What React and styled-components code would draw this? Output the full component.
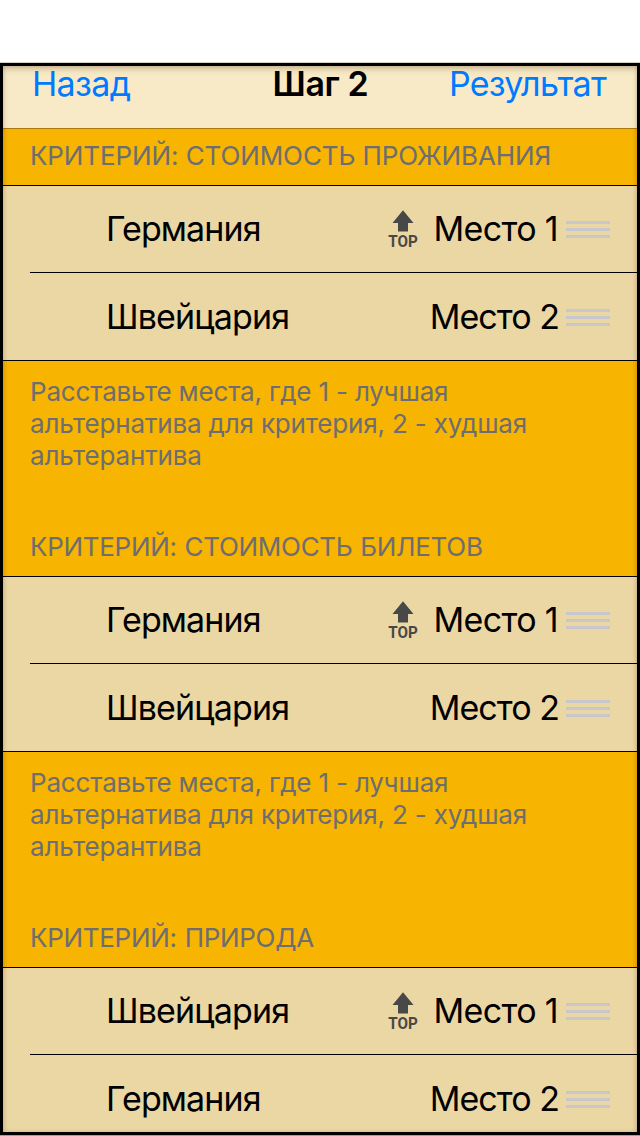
import React from "react";
import styled, { createGlobalStyle } from "styled-components";

const GlobalStyle = createGlobalStyle`
  * { box-sizing: border-box; }
  body { margin: 0; background: #fff; font-family: Inter, "Liberation Sans", sans-serif; }
`;

const Page = styled.div`
  width: 640px;
  height: 1136px;
  padding-top: 62px;
  overflow: hidden;
  background: #fff;
`;

const Frame = styled.div`
  position: relative;
  height: 1074px;
  border-top: 1px solid #d4d0c8;
  border-bottom: 1px solid #b59c80;
  overflow: hidden;
`;

const FrameEdge = styled.div`
  position: absolute;
  inset: 0;
  border: 3px solid #000;
  box-shadow: inset 0 4px 6px -1px rgba(70, 40, 0, 0.22), inset 0 0 4px rgba(70, 40, 0, 0.18);
  pointer-events: none;
`;

const NavBar = styled.header`
  display: grid;
  grid-template-columns: 1fr auto 1fr;
  height: 66px;
  padding: 0 34px 0 32px;
  background: #f8eac6;
  border-bottom: 1px solid #a97b0c;
  font-size: 34px;
  line-height: 42px;
  white-space: nowrap;
`;

const NavLink = styled.span`
  color: #007aff;
  letter-spacing: ${(p) => p.$spacing}px;
  text-align: ${(p) => p.$align};
`;

const Title = styled.span`
  padding-left: 3px;
  font-weight: 600;
  letter-spacing: -0.4px;
  color: #000;
`;

const SectionHeader = styled.h2`
  height: ${(p) => (p.$first ? 57 : 88)}px;
  margin: 0;
  padding: ${(p) => (p.$first ? 11 : 42)}px 0 0 30px;
  background: #f7b400;
  border-bottom: 1px solid #000;
  color: #6d6d72;
  font-size: 26px;
  font-weight: 400;
  line-height: 32px;
  letter-spacing: ${(p) => p.$spacing}px;
  word-spacing: ${(p) => p.$gap}px;
  white-space: nowrap;
`;

const Hint = styled.p`
  height: 128px;
  margin: 0;
  padding: 15px 0 0 30px;
  background: #f7b400;
  color: #6d6d72;
  font-size: 26px;
  line-height: 32px;
`;

const HintLine = styled.span`
  display: block;
  letter-spacing: -0.17px;
  white-space: nowrap;
`;

const Rows = styled.div`
  border-bottom: 1px solid #000;
  background: #ebd7a4;
`;

const Row = styled.div`
  display: flex;
  align-items: flex-start;
  height: 87px;
  margin-left: 30px;
  padding: ${(p) => (p.$divided ? 22 : 23)}px 30px 0 76px;
  border-bottom: ${(p) => (p.$divided ? "1px solid #000" : "0")};
  color: #000;
  font-size: 34px;
  line-height: 42px;
`;

const Name = styled.span`
  flex: 1;
  letter-spacing: ${(p) => p.$spacing}px;
`;

const TopIcon = styled.svg`
  width: 34px;
  height: 40px;
  margin: 2px 14px 0 0;
`;

const Place = styled.span`
  margin-right: ${(p) => p.$gap}px;
  letter-spacing: ${(p) => p.$spacing}px;
  white-space: nowrap;
`;

const Grip = styled.span`
  width: 44px;
  height: 17px;
  margin-top: 13px;
  border: solid #c7c7cc;
  border-width: 3px 0;
  background: linear-gradient(#c7c7cc, #c7c7cc) center / 44px 3px no-repeat;
`;

const names = {
  de: { text: "Германия", spacing: -0.93 },
  ch: { text: "Швейцария", spacing: -0.84 },
};

const sections = [
  { title: "КРИТЕРИЙ: СТОИМОСТЬ ПРОЖИВАНИЯ", spacing: -0.1, gap: 0, order: ["de", "ch"] },
  { title: "КРИТЕРИЙ: СТОИМОСТЬ БИЛЕТОВ", spacing: -0.29, gap: 0.8, order: ["de", "ch"] },
  { title: "КРИТЕРИЙ: ПРИРОДА", spacing: -0.3, gap: 1, order: ["ch", "de"] },
];

const hintLines = [
  "Расставьте места, где 1 - лучшая",
  "альтернатива для критерия, 2 - худшая",
  "альтерантива",
];

const places = [
  { spacing: -0.65, gap: 8 },
  { spacing: -0.95, gap: 7 },
];

function MoveToTop() {
  return (
    <TopIcon viewBox="0 0 34 40">
      <path d="M17 0.3 L27.5 13 H22 V21.4 H12 V13 H6.5 Z" fill="#484848" />
      <text x="17" y="36.8" textAnchor="middle" textLength="29.5" lengthAdjust="spacingAndGlyphs"
        fontFamily="Roboto, sans-serif" fontWeight="700" fontSize="17" fill="#484848">TOP</text>
    </TopIcon>
  );
}

function Section({ section, first, last }) {
  return (
    <section>
      <SectionHeader $first={first} $spacing={section.spacing} $gap={section.gap}>{section.title}</SectionHeader>
      <Rows>
        {section.order.map((id, i) => (
          <Row key={id} $divided={i === 0}>
            <Name $spacing={names[id].spacing}>{names[id].text}</Name>
            {i === 0 && <MoveToTop />}
            <Place $spacing={places[i].spacing} $gap={places[i].gap}>Место {i + 1}</Place>
            <Grip />
          </Row>
        ))}
      </Rows>
      {!last && (
        <Hint>
          {hintLines.map((line) => (
            <HintLine key={line}>{line}</HintLine>
          ))}
        </Hint>
      )}
    </section>
  );
}

export default function App() {
  return (
    <Page>
      <GlobalStyle />
      <Frame>
        <NavBar>
          <NavLink $align="left" $spacing={-0.65}>Назад</NavLink>
          <Title>Шаг 2</Title>
          <NavLink $align="right" $spacing={-0.75}>Результат</NavLink>
        </NavBar>
        {sections.map((s, i) => (
          <Section key={s.title} section={s} first={i === 0} last={i === sections.length - 1} />
        ))}
        <FrameEdge />
      </Frame>
    </Page>
  );
}
